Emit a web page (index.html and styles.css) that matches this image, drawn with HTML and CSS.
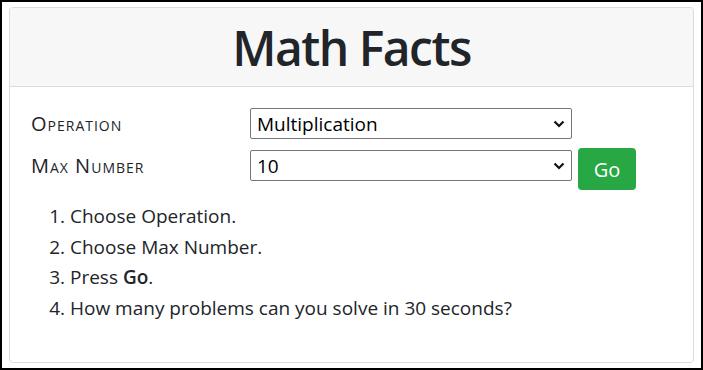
FILE: index.html
```
<!DOCTYPE html>
<html lang="en">
<head>
    <meta charset="UTF-8">
    <meta name="viewport" content="width=device-width, initial-scale=1.0">
    <title>Math Facts</title>

    <link rel="stylesheet" href="styles.css">
</head>
<body>

<div class="frame">
    <div class="card">
        <div class="card-header">
            <h1>Math Facts</h1>
        </div>
        <div class="card-body">
            <div class="form-row">
                <label for="operation">Operation</label>
                <div class="select-wrap">
                    <select id="operation">
                        <option>Addition</option>
                        <option>Subtraction</option>
                        <option selected>Multiplication</option>
                        <option>Division</option>
                    </select>
                    <svg class="chevron" width="12" height="8" viewBox="0 0 12 8"><path d="M1.5 1.5 L6 6 L10.5 1.5" fill="none" stroke="#111" stroke-width="2.2"/></svg>
                </div>
            </div>
            <div class="form-row">
                <label for="maxNumber">Max Number</label>
                <div class="select-wrap">
                    <select id="maxNumber">
                        <option>5</option>
                        <option selected>10</option>
                        <option>12</option>
                    </select>
                    <svg class="chevron" width="12" height="8" viewBox="0 0 12 8"><path d="M1.5 1.5 L6 6 L10.5 1.5" fill="none" stroke="#111" stroke-width="2.2"/></svg>
                </div>
                <button type="button" class="btn-go">Go</button>
            </div>
            <ol class="steps">
                <li>Choose Operation.</li>
                <li>Choose Max Number.</li>
                <li>Press <b>Go</b>.</li>
                <li>How many problems can you solve in 30 seconds?</li>
            </ol>
        </div>
    </div>
</div>

</body>
</html>
```

FILE: styles.css
```
/* Basic styling */
html, body {
    height: 100%;
}
body {
    margin: 0;
    font-family: "Open Sans", "Noto Sans", sans-serif;
    color: #212529;
    background-color: #fff;
}
.frame {
    box-sizing: border-box;
    height: 100%;
    border: 2px solid #000;
    padding: 5px 7px 5px 7px;
}
.card {
    box-sizing: border-box;
    height: 100%;
    border: 1px solid #dcdcdc;
    border-radius: 4px;
    overflow: hidden;
}
.card-header {
    background-color: #f7f7f7;
    border-bottom: 1px solid #dcdcdc;
    height: 78px;
    display: flex;
    align-items: center;
    justify-content: center;
}
h1 {
    margin: 0;
    font-size: 48px;
    font-weight: 600;
    letter-spacing: -1.5px;
}
.card-body {
    padding: 21px 21px 0 21px;
}
.form-row {
    display: flex;
    align-items: flex-start;
    margin-bottom: 11px;
}
.form-row label {
    width: 219px;
    height: 31px;
    line-height: 31px;
    font-variant: small-caps;
    font-size: 20px;
    letter-spacing: 1px;
}
.select-wrap {
    position: relative;
    width: 322px;
}
.select-wrap select {
    display: block;
    width: 100%;
    height: 31px;
    appearance: none;
    -webkit-appearance: none;
    border: 1px solid #767676;
    border-radius: 2px;
    background: #fff;
    padding: 0 6px;
    font-family: inherit;
    font-size: 19px;
    color: #000;
}
.chevron {
    position: absolute;
    right: 7px;
    top: 12px;
}
.btn-go {
    margin: -2px 0 0 6px;
    width: 58px;
    height: 42px;
    background-color: #28a745;
    color: #fff;
    border: none;
    border-radius: 4px;
    font-family: inherit;
    font-size: 20px;
}
.steps {
    margin: 0;
    padding-left: 39px;
    font-size: 19px;
}
.steps li {
    line-height: 30.5px;
}
.steps b {
    font-weight: 600;
}
```
